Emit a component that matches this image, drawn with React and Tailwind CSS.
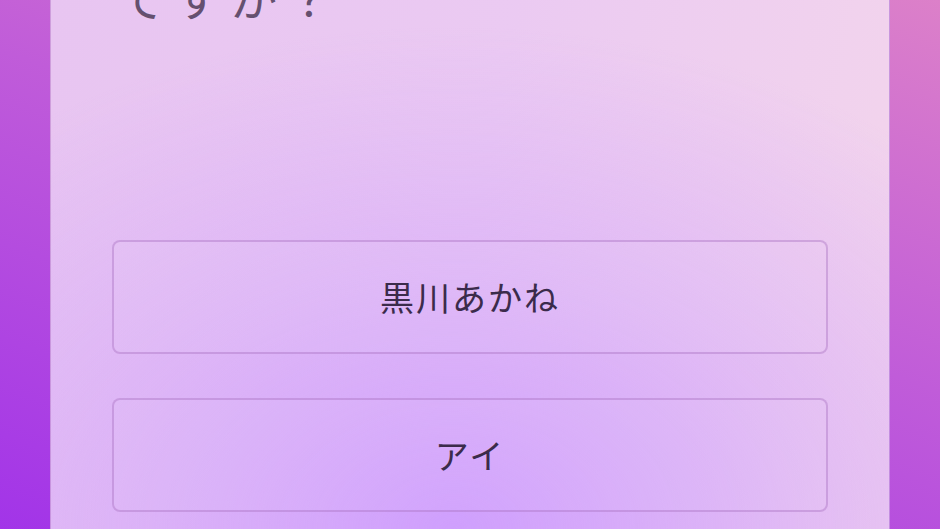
import React from "react";

const options = ["黒川あかね", "アイ"];

export default function App() {
  return (
    <div
      className="h-[529px] w-full overflow-hidden bg-[linear-gradient(200deg,#dc80c9_0%,#c05cd9_45%,#a234e8_100%)] px-[50px]"
      style={{ fontFamily: '"Noto Sans CJK JP", "Noto Sans", sans-serif' }}
    >
      <div className="flex h-full flex-col border-x border-[#9c4fc4]/40 bg-[radial-gradient(ellipse_85%_95%_at_48%_100%,#cf9ffd_0%,rgba(207,159,253,0.45)_50%,rgba(207,159,253,0)_100%),linear-gradient(100deg,#e8c5f1_0%,#ebcaf2_50%,#f3d5ec_100%)] px-[61px]">
        {/* Question (only the last line is on screen) */}
        <h1 className="-mt-[37px] pl-[6px] text-[47px] font-normal leading-[66px] tracking-[9px] text-[#65506f]">
          ですか？
        </h1>

        {/* Answer options */}
        <div className="mt-[211px] flex flex-col gap-[44px]">
          {options.map((opt) => (
            <button
              key={opt}
              className="flex h-[114px] w-full shrink-0 items-center justify-center rounded-lg border-2 border-[#a56cbf]/40 bg-white/5 text-[34px] leading-none tracking-[2px] text-[#3b2b4b]"
            >
              {opt}
            </button>
          ))}
        </div>
      </div>
    </div>
  );
}
